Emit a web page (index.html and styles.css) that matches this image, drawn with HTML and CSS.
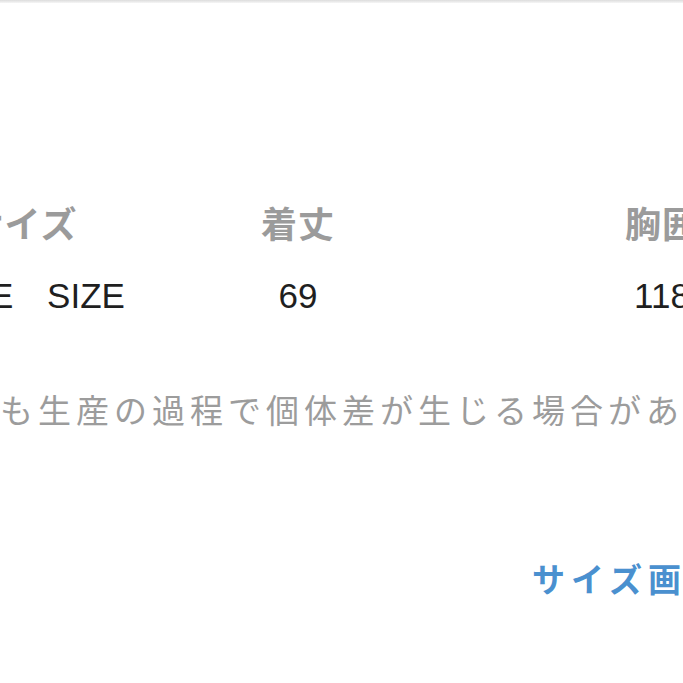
FILE: index.html
```html
<!DOCTYPE html>
<html lang="ja">
<head>
<meta charset="utf-8">
<title>サイズ表</title>
<link rel="stylesheet" href="styles.css">
</head>
<body>
<div class="page">
  <div class="topline"></div>
  <div class="size-table">
    <div class="cell head first">サイズ</div>
    <div class="cell head">着丈</div>
    <div class="cell head">胸囲</div>
    <div class="cell val first-val">FREE SIZE</div>
    <div class="cell val">69</div>
    <div class="cell val">118</div>
  </div>
  <p class="note">も生産の過程で個体差が生じる場合があります。</p>
  <p class="link-row"><a class="size-link" href="#">サイズ画像について</a></p>
</div>
</body>
</html>
```

FILE: styles.css
```css
html, body {
  margin: 0;
  padding: 0;
  background: #ffffff;
}
body {
  width: 683px;
  height: 683px;
  overflow: hidden;
  font-family: "Liberation Sans", "Noto Sans CJK JP", sans-serif;
}
.page {
  width: 683px;
  overflow: hidden;
}
.topline {
  height: 3px;
  background: linear-gradient(#dcdcdc, #f6f6f6);
}
.size-table {
  display: grid;
  grid-template-columns: 205px 346px 382px;
  row-gap: 34px;
  margin: 199px 0 0 -80px;
  width: 933px;
}
.cell {
  text-align: center;
  white-space: nowrap;
  line-height: 40px;
  height: 40px;
}
.head {
  font-family: "Noto Sans CJK JP", sans-serif;
  font-weight: 700;
  font-size: 36px;
  letter-spacing: 1px;
  color: #9b9b9b;
}
.val {
  font-family: "Liberation Sans", "Noto Sans CJK JP", sans-serif;
  font-size: 35px;
  color: #1f1f1f;
}
.first-val {
  text-align: right;
  padding-right: 2px;
  word-spacing: 24px;
}
.note {
  margin: 73px 0 0 0;
  font-family: "Noto Sans CJK JP", sans-serif;
  font-size: 33px;
  letter-spacing: 5px;
  line-height: 40px;
  color: #9c9c9c;
  white-space: nowrap;
}
.link-row {
  margin: 129px 0 0 0;
  padding-left: 532px;
  line-height: 40px;
  white-space: nowrap;
}
.size-link {
  font-family: "Noto Sans CJK JP", sans-serif;
  font-weight: 700;
  font-size: 33px;
  letter-spacing: 6px;
  color: #4a90cf;
  text-decoration: none;
}
```
